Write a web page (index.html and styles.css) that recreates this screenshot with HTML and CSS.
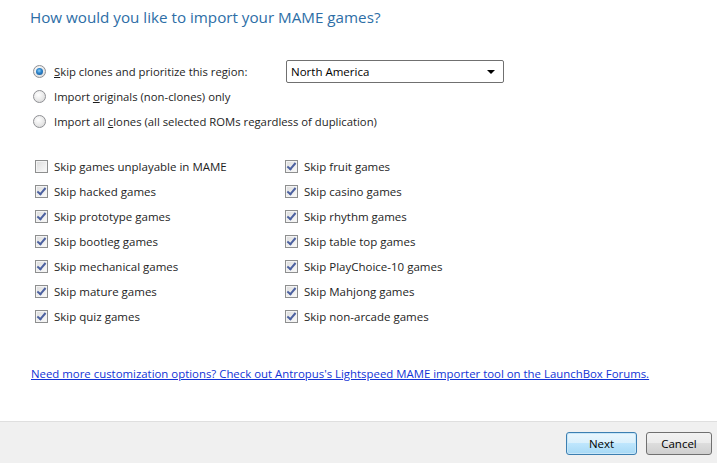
FILE: index.html
```html
<!DOCTYPE html>
<html>
<head>
<meta charset="utf-8">
<link rel="stylesheet" href="styles.css">
</head>
<body>
<div class="page">
  <main class="content">
    <h1 class="title">How would you like to import your MAME games?</h1>

    <div class="radios">
      <div class="row">
        <span class="radio checked"></span>
        <span class="label region-label"><u>S</u>kip clones and prioritize this region:</span>
        <div class="select">
          <span class="select-text">North America</span>
          <span class="caret"></span>
        </div>
      </div>
      <div class="row">
        <span class="radio"></span>
        <span class="label">Import <u>o</u>riginals (non-clones) only</span>
      </div>
      <div class="row">
        <span class="radio"></span>
        <span class="label">Import all <u>c</u>lones (all selected ROMs regardless of duplication)</span>
      </div>
    </div>

    <div class="checks">
      <div class="row"><span class="box"></span><span class="label">Skip games unplayable in MAME</span></div>
      <div class="row"><span class="box on"></span><span class="label">Skip fruit games</span></div>
      <div class="row"><span class="box on"></span><span class="label">Skip hacked games</span></div>
      <div class="row"><span class="box on"></span><span class="label">Skip casino games</span></div>
      <div class="row"><span class="box on"></span><span class="label">Skip prototype games</span></div>
      <div class="row"><span class="box on"></span><span class="label">Skip rhythm games</span></div>
      <div class="row"><span class="box on"></span><span class="label">Skip bootleg games</span></div>
      <div class="row"><span class="box on"></span><span class="label">Skip table top games</span></div>
      <div class="row"><span class="box on"></span><span class="label">Skip mechanical games</span></div>
      <div class="row"><span class="box on"></span><span class="label">Skip PlayChoice-10 games</span></div>
      <div class="row"><span class="box on"></span><span class="label">Skip mature games</span></div>
      <div class="row"><span class="box on"></span><span class="label">Skip Mahjong games</span></div>
      <div class="row"><span class="box on"></span><span class="label">Skip quiz games</span></div>
      <div class="row"><span class="box on"></span><span class="label">Skip non-arcade games</span></div>
    </div>

    <a class="link" href="#">Need more customization options? Check out Antropus's Lightspeed MAME importer tool on the LaunchBox Forums.</a>
  </main>
  <footer class="footer">
    <button class="btn default">Next</button>
    <button class="btn cancel">Cancel</button>
  </footer>
</div>
</body>
</html>
```
FILE: styles.css
```css
html, body {
  margin: 0;
  padding: 0;
  background: #ffffff;
}
body {
  font-family: "Open Sans", "Noto Sans", "DejaVu Sans", sans-serif;
  font-size: 11.5px;
  color: #1e1e1e;
}
.page {
  width: 717px;
  height: 463px;
  display: flex;
  flex-direction: column;
}
.content {
  flex: 1;
  display: flex;
  flex-direction: column;
  padding-left: 33px;
}
.title {
  margin: 0;
  padding-top: 6px;
  margin-left: -3px;
  font-weight: normal;
  font-size: 15.2px;
  line-height: 22px;
  color: #2d6ea6;
}
.radios {
  margin-top: 31px;
  display: flex;
  flex-direction: column;
}
.row {
  height: 25px;
  display: flex;
  align-items: center;
}
.radio {
  width: 11px;
  height: 11px;
  border-radius: 50%;
  border: 1px solid #8f9094;
  background: radial-gradient(circle at 40% 35%, #ffffff 0%, #e8e8e8 55%, #d2d2d2 100%);
  position: relative;
  flex: none;
}
.radio.checked::after {
  content: "";
  position: absolute;
  left: 2px;
  top: 2px;
  width: 7px;
  height: 7px;
  border-radius: 50%;
  background: radial-gradient(circle at 45% 40%, #8fd0f8 0%, #2f86cc 40%, #134f8f 100%);
}
.radios .label {
  margin-left: 8px;
  font-size: 11.3px;
}
.region-label {
  width: 232px;
  flex: none;
}
.select {
  width: 204px;
  height: 21px;
  border: 1px solid #707070;
  border-radius: 2px;
  background: #ffffff;
  display: flex;
  align-items: center;
  justify-content: space-between;
  padding: 0 8px 0 4px;
  box-sizing: content-box;
}
.select-text {
  color: #000;
  font-size: 11.5px;
}
.caret {
  width: 0;
  height: 0;
  border-left: 4px solid transparent;
  border-right: 4px solid transparent;
  border-top: 4px solid #000;
}
.checks {
  margin-top: 20px;
  display: grid;
  grid-template-columns: 250px 250px;
  margin-left: 2px;
}
.box {
  width: 11px;
  height: 11px;
  border: 1px solid #8e8f8f;
  background: linear-gradient(135deg, #dcdcdc, #fbfbfb);
  box-shadow: inset 0 0 0 1px #f4f4f4;
  position: relative;
  flex: none;
}
.box.on::after {
  content: "";
  position: absolute;
  left: 3px;
  top: 0px;
  width: 3px;
  height: 7px;
  border-right: 2px solid #4c61a0;
  border-bottom: 2px solid #4c61a0;
  transform: rotate(40deg);
}
.checks .label {
  margin-left: 6px;
}
.link {
  margin-top: 37px;
  margin-left: -2px;
  color: #1133d6;
  font-size: 11.4px;
  text-decoration: underline;
  line-height: 16px;
  align-self: flex-start;
}
.footer {
  height: 41px;
  border-top: 1px solid #dfdfdf;
  background: #f0f0f0;
  display: flex;
  justify-content: flex-end;
  align-items: center;
  gap: 9px;
  padding-right: 5px;
}
.btn {
  height: 23px;
  font-family: inherit;
  font-size: 11.5px;
  color: #000;
  border-radius: 3px;
  border: 1px solid #707070;
  background: linear-gradient(#f2f2f2, #ebebeb 50%, #dddddd 50%, #cfcfcf);
  padding: 0;
  margin-top: 2px;
}
.btn.default {
  width: 71px;
  border-color: #3c7fb1;
  background: linear-gradient(#eaf6fd, #d9f0fc 50%, #bee6fd 50%, #a7d9f5);
  box-shadow: inset 0 0 0 1px #c7e6f8;
}
.btn.cancel {
  width: 66px;
}
```
